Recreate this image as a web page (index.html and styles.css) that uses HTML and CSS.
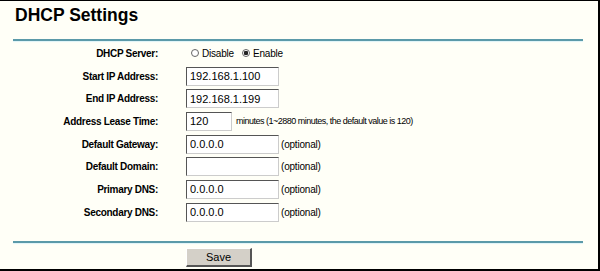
FILE: index.html
```html
<!DOCTYPE html>
<html lang="en">
<head>
    <meta charset="UTF-8">
    <title>DHCP Settings</title>
    <link rel="stylesheet" href="styles.css">
</head>
<body>
    <div class="page">
        <h1>DHCP Settings</h1>
        <div class="rule"></div>

        <form class="settings">
            <label>DHCP Server:</label>
            <div class="field">
                <span class="radio"></span><span class="opt">Disable</span>
                <span class="radio checked"></span><span class="opt">Enable</span>
            </div>

            <label>Start IP Address:</label>
            <div class="field"><input type="text" class="ip" value="192.168.1.100"></div>

            <label>End IP Address:</label>
            <div class="field"><input type="text" class="ip" value="192.168.1.199"></div>

            <label>Address Lease Time:</label>
            <div class="field">
                <input type="text" class="short" value="120">
                <span class="note lease">minutes (1~2880 minutes, the default value is 120)</span>
            </div>

            <label>Default Gateway:</label>
            <div class="field"><input type="text" class="wide" value="0.0.0.0"><span class="note">(optional)</span></div>

            <label>Default Domain:</label>
            <div class="field"><input type="text" class="wide" value=""><span class="note">(optional)</span></div>

            <label>Primary DNS:</label>
            <div class="field"><input type="text" class="wide" value="0.0.0.0"><span class="note">(optional)</span></div>

            <label>Secondary DNS:</label>
            <div class="field"><input type="text" class="wide" value="0.0.0.0"><span class="note">(optional)</span></div>
        </form>

        <div class="rule bottom"></div>
        <div class="actions">
            <button type="button">Save</button>
        </div>
    </div>
</body>
</html>
```

FILE: styles.css
```css
html, body {
    margin: 0;
    padding: 0;
    background: #fffff7;
}

.page {
    box-sizing: border-box;
    width: 600px;
    height: 271px;
    border-top: 1px solid #000;
    border-right: 2px solid #000;
    border-bottom: 2px solid #000;
    background: #fffff7;
    font-family: "Liberation Sans", Arial, sans-serif;
    color: #000;
    overflow: hidden;
}

h1 {
    margin: 0;
    padding: 4px 0 0 15px;
    font-size: 17.5px;
    line-height: 20px;
    font-weight: bold;
}

.rule {
    margin: 14px 0 0 13px;
    width: 570px;
    height: 2px;
    background: #5b9aa9;
    box-shadow: 0 1px 1px #dff4f8;
}

.settings {
    display: grid;
    grid-template-columns: 158px 1fr;
    grid-auto-rows: 22.7px;
    column-gap: 28px;
    margin: 1px 0 0;
    font-size: 10px;
}

.settings label {
    text-align: right;
    font-weight: bold;
    align-self: center;
    letter-spacing: -0.3px;
}

.field {
    display: flex;
    align-items: center;
}

.radio {
    box-sizing: border-box;
    width: 8px;
    height: 8px;
    margin: 0 3px 0 5px;
    border: 1px solid #666;
    border-radius: 50%;
    background: #fff;
}

.radio.checked {
    background: radial-gradient(circle, #222 0 2px, #fff 2.5px);
    margin-left: 7px;
}

.opt {
    letter-spacing: -0.2px;
}

.opt + .radio {
    margin-left: 8px;
}

input {
    box-sizing: border-box;
    height: 19px;
    margin: 0;
    padding: 0 3px;
    font-family: "Liberation Sans", Arial, sans-serif;
    font-size: 11px;
    border-top: 1px solid #555;
    border-left: 1px solid #555;
    border-right: 1px solid #ccc;
    border-bottom: 1px solid #ccc;
    background: #fff;
}

.ip {
    width: 93px;
}

.wide {
    width: 93px;
}

.short {
    width: 46px;
}

.note {
    margin-left: 2px;
    letter-spacing: -0.2px;
}

.note.lease {
    margin-left: 4px;
    font-size: 9px;
    letter-spacing: -0.5px;
}

.rule.bottom {
    margin-top: 17px;
}

.actions {
    padding: 4px 0 0 186px;
}

.actions button {
    width: 66px;
    height: 19px;
    padding: 0;
    font-family: "Liberation Sans", Arial, sans-serif;
    font-size: 11px;
    background: #d4d0c8;
    border-top: 1px solid #fff;
    border-left: 1px solid #fff;
    border-right: 2px solid #555;
    border-bottom: 2px solid #555;
}
```
